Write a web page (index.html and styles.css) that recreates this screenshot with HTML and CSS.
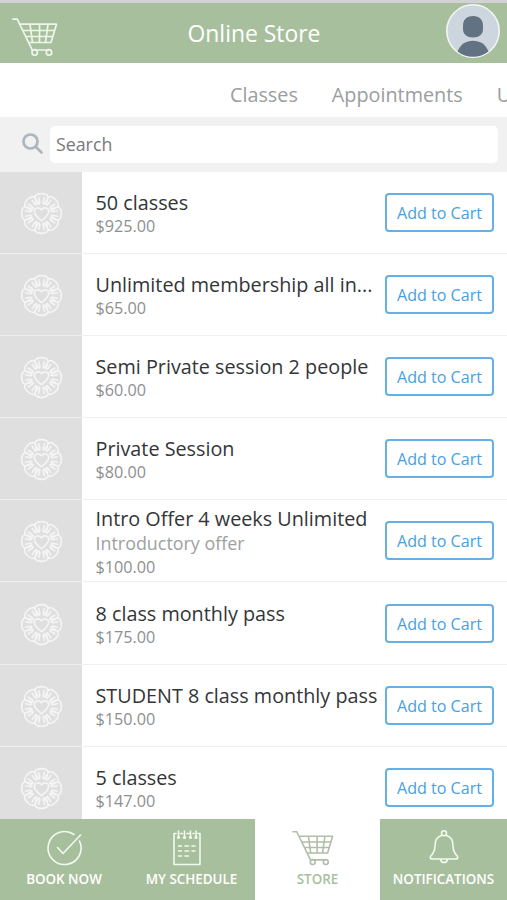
FILE: index.html
```html
<!DOCTYPE html>
<html lang="en">
<head>
<meta charset="utf-8">
<title>Online Store</title>
<link rel="stylesheet" href="styles.css">
</head>
<body>
<svg class="defs" aria-hidden="true">
  <symbol id="cart" viewBox="0 0 46 40">
    <path d="M1 2.2H5.2L20.5 33.5M8.5 7.2H44.5L39 25.5H17M11.5 13.5H42.5M14.5 19.5H40.5M18 7.2L20.5 25.5M27.5 7.2V25.5M36 7.2L33.5 25.5M22 33H37"/>
    <circle cx="22.7" cy="35.4" r="2.7"/><circle cx="37" cy="35.4" r="2.7"/>
  </symbol>
  <symbol id="flower" viewBox="-21 -21 42 42">
    <path id="p" d="M-6.600 -16C-5 -20.500 5 -20.500 6.600 -16M-6 -14.500L-3 -9.500Q-1.600 -9 -1.700 -11L-2.700 -15.500M6 -14.500L3 -9.500Q1.600 -9 1.700 -11L2.700 -15.500"/>
    <use href="#p" transform="rotate(45)"/><use href="#p" transform="rotate(90)"/>
    <use href="#p" transform="rotate(135)"/><use href="#p" transform="rotate(180)"/>
    <use href="#p" transform="rotate(225)"/><use href="#p" transform="rotate(270)"/>
    <use href="#p" transform="rotate(315)"/>
    <path d="M0 7C-3 4.500 -7 1.500 -7 -2C-7 -6 -2 -6.500 0 -3.500C2 -6.500 7 -6 7 -2C7 1.500 3 4.500 0 7Z"/>
  </symbol>
</svg>
<div class="app">
  <header class="topbar">
    <svg class="cart-top"><use href="#cart"/></svg>
    <h1>Online Store</h1>
    <svg class="avatar" viewBox="0 0 54 54">
      <circle cx="27" cy="27" r="26.2" fill="#cdd6df" stroke="#f3f8f5" stroke-width="1.5"/>
      <path d="M27 12C33.500 12 37 16 37 21.500V25C37 30.500 33 33.500 27 33.500S17 30.500 17 25V21.500C17 16 20.500 12 27 12Z" fill="#637282"/>
      <path d="M11.500 47.500C14.500 40 20 36.700 27 36.700S39.500 40 42.500 47.500A25.400 25.400 0 0 1 11.500 47.500Z" fill="#637282"/>
    </svg>
  </header>
  <nav class="tabs"><span class="t1">Classes</span><span class="t2">Appointments</span><span>U</span></nav>
  <div class="search">
    <svg class="lens" viewBox="0 0 22 22"><circle cx="8.500" cy="8.500" r="7"/><path d="M13.700 13.700L19.500 19.500"/></svg>
    <div class="field">Search</div>
  </div>
  <main class="list">
    <article class="row"><div class="thumb"><svg><use href="#flower"/></svg></div><div class="info"><h2>50 classes</h2><p class="price">$925.00</p></div><button>Add to Cart</button></article>
    <article class="row"><div class="thumb"><svg><use href="#flower"/></svg></div><div class="info"><h2>Unlimited membership all in...</h2><p class="price">$65.00</p></div><button>Add to Cart</button></article>
    <article class="row"><div class="thumb"><svg><use href="#flower"/></svg></div><div class="info"><h2>Semi Private session 2 people</h2><p class="price">$60.00</p></div><button>Add to Cart</button></article>
    <article class="row"><div class="thumb"><svg><use href="#flower"/></svg></div><div class="info"><h2>Private Session</h2><p class="price">$80.00</p></div><button>Add to Cart</button></article>
    <article class="row"><div class="thumb"><svg><use href="#flower"/></svg></div><div class="info"><h2>Intro Offer 4 weeks Unlimited</h2><p class="note">Introductory offer</p><p class="price">$100.00</p></div><button>Add to Cart</button></article>
    <article class="row"><div class="thumb"><svg><use href="#flower"/></svg></div><div class="info"><h2>8 class monthly pass</h2><p class="price">$175.00</p></div><button>Add to Cart</button></article>
    <article class="row"><div class="thumb"><svg><use href="#flower"/></svg></div><div class="info"><h2>STUDENT 8 class monthly pass</h2><p class="price">$150.00</p></div><button>Add to Cart</button></article>
    <article class="row"><div class="thumb"><svg><use href="#flower"/></svg></div><div class="info"><h2>5 classes</h2><p class="price">$147.00</p></div><button>Add to Cart</button></article>
  </main>
  <footer class="bottom">
    <div class="item"><svg viewBox="0 0 40 38"><path d="M30 5.500A16.500 16.500 0 1 0 35.500 12M13.500 18.500L19 24.500L36.500 6"/></svg><span>BOOK NOW</span></div>
    <div class="item schedule"><svg viewBox="0 0 40 38"><path d="M9 4.500H7V35.500H33V4.500H31M13.500 4.500H15.500M20 4.500H22M26 4.500H27M11.500 2V8M17.500 2V8M23.500 2V8M29 2V8M11.500 17H14.500M18 17H21.500M25 17H28M11.500 22H14.500M18 22H21.500M25 22H28M11.500 27H14.500M18 27H21.500"/><g class="dots"><circle cx="11.500" cy="8.500" r="1.600"/><circle cx="17.500" cy="8.500" r="1.600"/><circle cx="23.500" cy="8.500" r="1.600"/><circle cx="29" cy="8.500" r="1.600"/></g></svg><span>MY SCHEDULE</span></div>
    <div class="item active"><svg class="cart-small"><use href="#cart"/></svg><span>STORE</span></div>
    <div class="item notices"><svg viewBox="0 0 40 38"><path d="M17.500 6.500C12.500 8 11 12 11 17C11 23 8.500 25 6.500 27.500C5.500 29.500 7 30 9 30H31C33 30 34.500 29.500 33.500 27.500C31.500 25 29 23 29 17C29 12 27.500 8 22.500 6.500M16.500 30.500A3.600 4 0 0 0 23.500 30.500"/><circle cx="20" cy="4.300" r="2.500"/></svg><span>NOTIFICATIONS</span></div>
  </footer>
</div>
</body>
</html>
```
FILE: styles.css
```css
* { box-sizing: border-box; }
body { margin: 0; font-family: "Open Sans", sans-serif; background: #fff; }
h1, h2, p { margin: 0; font-weight: 400; }
.defs { display: none; }
svg { display: block; fill: none; stroke-linecap: round; stroke-linejoin: round; }
.app { width: 507px; height: 900px; display: flex; flex-direction: column; overflow: hidden; }
.topbar { height: 63px; flex: none; border-top: 3px solid #d2d2d6; background: #a8bf9e; display: grid; grid-template-columns: 62px 1fr 62px; align-items: center; }
.topbar h1 { color: #fff; font-size: 22.9px; line-height: 30px; text-align: center; padding: 2px 0 0 1px; }
.cart-top { width: 46px; height: 40px; margin: 8px 0 0 12px; stroke: #edf7e9; stroke-width: 1.7; }
.avatar { width: 54px; height: 54px; margin: -5px 0 0 1px; }
.tabs { height: 54px; flex: none; padding: 16px 0 0 230px; display: flex; color: #9b9da0; font-size: 19.8px; line-height: 32px; white-space: nowrap; overflow: hidden; }
.t1, .t2 { margin-right: 34px; }
.search { height: 55px; flex: none; background: #f1f1f1; display: flex; align-items: center; padding: 0 9px 0 22px; }
.lens { width: 22px; height: 22px; margin: -1px 6px 0 0; stroke: #abb7ba; stroke-width: 2.7; }
.field { flex: 1; height: 37px; border-radius: 5px; background: #fff; color: #77797b; font-size: 17.8px; line-height: 37px; padding-left: 6px; }
.list { flex: 1; min-height: 0; overflow: hidden; }
.row { height: 82.1px; display: grid; grid-template-columns: 82px 1fr 122px; align-items: center; border-bottom: 1.5px solid #efefef; }
.thumb { align-self: stretch; display: flex; align-items: center; background: #dfdfdf; }
.thumb svg { width: 43px; height: 43px; margin-left: 20px; margin-top: 2px; stroke: #f5f5f5; stroke-width: 1.6; }
.info { padding: 3px 0 0 13.5px; white-space: nowrap; }
.info h2 { color: #333537; font-size: 19.8px; line-height: 25px; }
.price { color: #8d8f91; font-size: 16.2px; line-height: 23px; }
.note { color: #9ca1a3; font-size: 17.9px; line-height: 25px; }
.row button { width: 109px; height: 39px; padding: 2px 0 0; border: 2px solid #65b1e7; border-radius: 4px; background: #fff; color: #47a1e1; font: 16.1px/33px "Open Sans", sans-serif; justify-self: start; }
.bottom { height: 81px; flex: none; display: grid; grid-template-columns: 128px 127px 125px 127px; background: #a8bf9e; color: #fff; }
.item { display: flex; flex-direction: column; align-items: center; padding-top: 10px; }
.item svg { width: 40px; height: 38px; stroke: #f1faed; stroke-width: 1.6; }
.schedule svg { margin-right: 9px; }
.item span { font-size: 13.4px; font-weight: 600; line-height: 20px; margin-top: 2px; white-space: nowrap; }
.dots { fill: #f1faed; stroke: none; }
.item.active { background: #fff; color: #a8bf9e; }
.item .cart-small { width: 42px; margin-right: 9px; stroke: #b0bda7; stroke-width: 1.7; }
```
